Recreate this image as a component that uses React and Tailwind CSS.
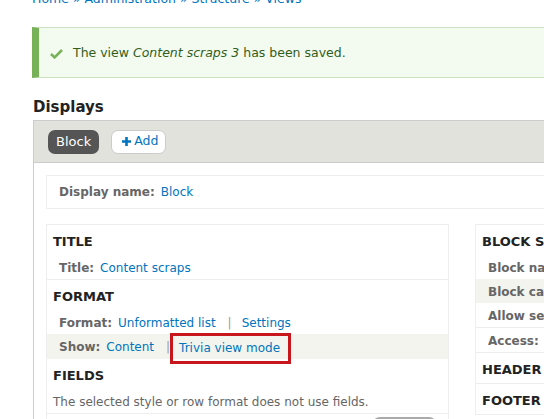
import React from "react";

const font = { fontFamily: '"DejaVu Sans", Verdana, sans-serif' };

function Row({ label, children, hl, h = "h-[24px]" }) {
  return (
    <div className={`${h} flex items-center pl-[12px] pt-[1px] whitespace-nowrap text-[12px] ${hl ? "bg-[#f3f4ee]" : ""}`}>
      <span className="font-bold text-[#666]">{label}</span>
      {children}
    </div>
  );
}

function Heading({ children }) {
  return (
    <div className="h-[30px] flex items-center pl-[6px] pt-[4px] text-[13px] font-bold uppercase text-[#222] whitespace-nowrap">
      {children}
    </div>
  );
}

const A = ({ children, className = "" }) => (
  <span className={`text-[#0074bd] ${className}`}>{children}</span>
);

export default function App() {
  return (
    <div className="w-[544px] h-[419px] overflow-hidden bg-white text-[12px] text-[#333]" style={font}>
      <div className="w-[800px] pl-[32px]">
        {/* breadcrumb */}
        <div className="mt-[-11px] h-[20px] leading-[20px] text-[12.5px] text-[#0074bd] whitespace-nowrap">
          Home » Administration » Structure » Views
        </div>

        {/* message */}
        <div className="mt-[18px] h-[51px] flex items-center border-y border-[#c9e1bd] border-l-[7px] border-l-[#77b259] bg-[#f3faef] text-[12.5px] text-[#325e1c] whitespace-nowrap">
          <svg className="ml-[11px] mr-[10px] mt-[1px]" width="13" height="11" viewBox="0 0 13 11">
            <path d="M1 6 L4.6 9.4 L12 2" fill="none" stroke="#77b259" strokeWidth="2.6" />
          </svg>
          <span className="mt-[1px]">
            The view <em>Content scraps 3</em> has been saved.
          </span>
        </div>

        {/* Displays */}
        <div className="mt-[19px] pl-[1px] h-[20px] leading-[20px] text-[15px] font-bold text-[#222]">Displays</div>

        <div className="mt-[3px] ml-[1px]">
          {/* tab bar */}
          <div className="h-[43px] bg-[#e1e2dc] border border-[#ccc] flex items-center pl-[14px] gap-[12px]">
            <div className="h-[24px] px-[8px] rounded-[7px] bg-[#555] text-white text-[13px] flex items-center">Block</div>
            <div className="h-[24px] pl-[10px] pr-[7px] rounded-[7px] bg-white border border-[#ccc] flex items-center text-[12.5px] text-[#0074bd]">
              <svg width="9" height="9" viewBox="0 0 9 9" className="mr-[3px]">
                <path d="M4.5 0 V9 M0 4.5 H9" stroke="#0074bd" strokeWidth="2.6" />
              </svg>
              Add
            </div>
          </div>

          {/* content area */}
          <div className="border-l border-[#ccc] pl-[12px] pt-[12px] h-[300px]">
            <div className="h-[34px] border border-[#eee] flex items-center pl-[12px] whitespace-nowrap">
              <span className="font-bold text-[#666]">Display name:</span>
              <A className="ml-[6px]">Block</A>
            </div>

            <div className="mt-[15px] flex gap-[26px] items-start">
              {/* left column */}
              <div className="w-[403px] border border-[#eee] border-b-0">
                <Heading>Title</Heading>
                <Row label="Title:">
                  <A className="ml-[6px]">Content scraps</A>
                </Row>
                <div className="border-t border-[#eee]" />
                <Heading>Format</Heading>
                <Row label="Format:">
                  <A className="ml-[6px]">Unformatted list</A>
                  <span className="text-[#999] ml-[12px] mr-[10px]">|</span>
                  <A>Settings</A>
                </Row>
                <Row label="Show:" hl h="h-[25px]">
                  <A className="ml-[6px]">Content</A>
                  <span className="text-[#999] ml-[12px]">|</span>
                  <span className="mt-[2px] border-[3px] border-[#c8161d] h-[31px] pl-[6px] pr-[8px] flex items-center text-[#0074bd]">
                    Trivia view mode
                  </span>
                </Row>
                <Heading>Fields</Heading>
                <div className="h-[24px] flex items-center pl-[6px] pt-[1px] text-[#666] whitespace-nowrap">
                  The selected style or row format does not use fields.
                </div>
                <div className="border-t border-[#eee] h-[10px] relative">
                  <div className="absolute left-[325px] top-[3px] w-[65px] h-[10px] rounded-t-[8px] border-t-[2px] border-x border-[#aaa]" />
                </div>
              </div>

              {/* right column */}
              <div className="w-[250px] border border-[#eee] border-b-0">
                <Heading>Block settings</Heading>
                <Row label="Block name:" />
                <Row label="Block category:" hl />
                <Row label="Allow settings:" />
                <div className="border-t border-[#eee]" />
                <Row label="Access:" />
                <div className="border-t border-[#eee]" />
                <Heading>Header</Heading>
                <div className="border-t border-[#eee]" />
                <Heading>Footer</Heading>
                <div className="border-t border-[#eee]" />
              </div>
            </div>
          </div>
        </div>
      </div>
    </div>
  );
}
